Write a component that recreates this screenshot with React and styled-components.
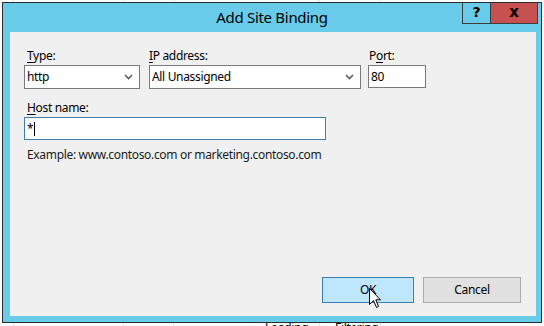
import React from "react";
import styled, { createGlobalStyle } from "styled-components";

const Global = createGlobalStyle`
  html, body { margin: 0; padding: 0; background: #ffffff; }
  body { font-family: "Noto Sans", "Open Sans", sans-serif; font-size: 12px; letter-spacing: -0.33px; color: #000; }
  * { box-sizing: border-box; }
`;

const Desktop = styled.div`
  position: relative;
  width: 544px;
  height: 326px;
  overflow: hidden;
  background: #ffffff;
  padding: 2px 0 0 2px;
`;

const Backdrop = styled.div`
  position: absolute;
  inset: 0;
  z-index: 0;
`;

const GridLine = styled.div`
  position: absolute;
  top: 0;
  width: 1px;
  height: 100%;
  background: #e3e3e3;
`;

const BackText = styled.div`
  position: absolute;
  font-size: 12px;
  color: #000;
  white-space: nowrap;
`;

const Window = styled.div`
  position: relative;
  z-index: 1;
  width: 540px;
  height: 321px;
  border: 1px solid #2b2b2b;
  background: #68cbea;
  display: flex;
  flex-direction: column;
`;

const TitleBar = styled.div`
  height: 29px;
  flex: none;
  display: grid;
  grid-template-columns: 1fr auto 1fr;
`;

const Title = styled.div`
  grid-column: 2;
  font-size: 15px;
  line-height: 28px;
  color: #000;
  letter-spacing: -0.3px;
`;

const Caption = styled.div`
  grid-column: 3;
  justify-self: end;
  align-self: start;
  display: flex;
  margin-right: 3px;
`;

const CaptionButton = styled.div`
  width: ${(p) => p.$w}px;
  height: 21px;
  border: 1px solid #3c3c3c;
  border-top: none;
  margin-left: ${(p) => (p.$join ? "-1px" : "0")};
  background: ${(p) => p.$bg};
  display: flex;
  align-items: center;
  justify-content: center;
  font-family: "DejaVu Sans", sans-serif;
  font-weight: bold;
  font-size: ${(p) => p.$fs}px;
  letter-spacing: 0;
  color: #000;
  padding-bottom: 2px;
`;

const Content = styled.div`
  flex: 1;
  margin: 0 5px 6px 7px;
  background: #f0f0f0;
  display: flex;
  flex-direction: column;
  padding: 16px 15px 13px 14px;
`;

const Row = styled.div`
  display: flex;
  align-items: flex-start;
`;

const Field = styled.div`
  display: flex;
  flex-direction: column;
  width: ${(p) => p.$w}px;
  margin-left: ${(p) => p.$ml || 0}px;
  margin-top: ${(p) => p.$mt || 0}px;
`;

const Label = styled.div`
  height: 16px;
  line-height: 16px;
  margin-bottom: 1px;
  padding-left: ${(p) => p.$indent}px;
  white-space: nowrap;
  u { text-decoration-thickness: 1px; text-underline-offset: 2px; }
`;

const Combo = styled.div`
  height: 24px;
  border: 1px solid #7a7a7a;
  background: #ffffff;
  display: flex;
  align-items: center;
  justify-content: space-between;
  padding: 0 6px 0 2px;
  line-height: 22px;
`;

const TextBox = styled.div`
  height: ${(p) => p.$h}px;
  border: 1px solid ${(p) => (p.$focus ? "#3c7fb1" : "#7a7a7a")};
  background: #ffffff;
  display: flex;
  align-items: center;
  padding-left: 2px;
`;

const Caret = styled.span`
  display: inline-block;
  width: 1px;
  height: 14px;
  background: #000;
  margin-left: 1px;
`;

const Hint = styled.div`
  margin-top: 7px;
  padding-left: 3px;
  line-height: 16px;
  color: #1a1a1a;
`;

const Spacer = styled.div`
  flex: 1;
`;

const ButtonRow = styled.div`
  display: flex;
  justify-content: flex-end;
  gap: 9px;
`;

const Button = styled.div`
  position: relative;
  width: ${(p) => p.$w}px;
  height: 26px;
  border: 1px solid ${(p) => (p.$hot ? "#3c7fb1" : "#adadad")};
  background: ${(p) => (p.$hot ? "#bee6fd" : "#e1e1e1")};
  display: flex;
  align-items: center;
  justify-content: center;
  line-height: 24px;
  color: #000;
`;

const Pointer = styled.svg`
  position: absolute;
  left: 46px;
  top: 10px;
  z-index: 2;
`;

const Chevron = () => (
  <svg width="9" height="6" viewBox="0 0 9 6">
    <path d="M1 1 L4.5 4.5 L8 1" fill="none" stroke="#5a5a5a" strokeWidth="1.6" />
  </svg>
);

export default function App() {
  return (
    <>
      <Global />
      <Desktop>
        <Backdrop>
          <GridLine style={{ left: 13 }} />
          <GridLine style={{ left: 123 }} />
          <GridLine style={{ left: 173 }} />
          <GridLine style={{ left: 319 }} />
          <GridLine style={{ left: 380 }} />
          <BackText style={{ left: 265, top: 319 }}>Loading</BackText>
          <BackText style={{ left: 335, top: 319 }}>Filtering</BackText>
        </Backdrop>
        <Window>
          <TitleBar>
            <Title>Add Site Binding</Title>
            <Caption>
              <CaptionButton $w={29} $fs={14} $bg="#68cbea">?</CaptionButton>
              <CaptionButton $w={48} $fs={15} $bg="#c75050" $join>x</CaptionButton>
            </Caption>
          </TitleBar>
          <Content>
            <Row>
              <Field $w={116}>
                <Label $indent={3}><u>T</u>ype:</Label>
                <Combo>
                  <span>http</span>
                  <Chevron />
                </Combo>
              </Field>
              <Field $w={212} $ml={9}>
                <Label $indent={0}><u>I</u>P address:</Label>
                <Combo>
                  <span>All Unassigned</span>
                  <Chevron />
                </Combo>
              </Field>
              <Field $w={58} $ml={7}>
                <Label $indent={1}>P<u>o</u>rt:</Label>
                <TextBox $h={23}>80</TextBox>
              </Field>
            </Row>
            <Field $w={302} $mt={11}>
              <Label $indent={3}><u>H</u>ost name:</Label>
              <TextBox $h={23} $focus>
                <span>*</span>
                <Caret />
              </TextBox>
            </Field>
            <Hint>Example: www.contoso.com or marketing.contoso.com</Hint>
            <Spacer />
            <ButtonRow>
              <Button $w={92} $hot>
                OK
                <Pointer width="13" height="21" viewBox="0 0 13 21">
                  <path
                    d="M0.5 0.5 L0.5 16.5 L4.5 12.5 L7.5 19.5 L9.5 18.5 L6.8 11.8 L11.5 11.8 Z"
                    fill="#ffffff"
                    stroke="#000000"
                    strokeWidth="1"
                    strokeLinejoin="miter"
                  />
                </Pointer>
              </Button>
              <Button $w={98}>Cancel</Button>
            </ButtonRow>
          </Content>
        </Window>
      </Desktop>
    </>
  );
}
